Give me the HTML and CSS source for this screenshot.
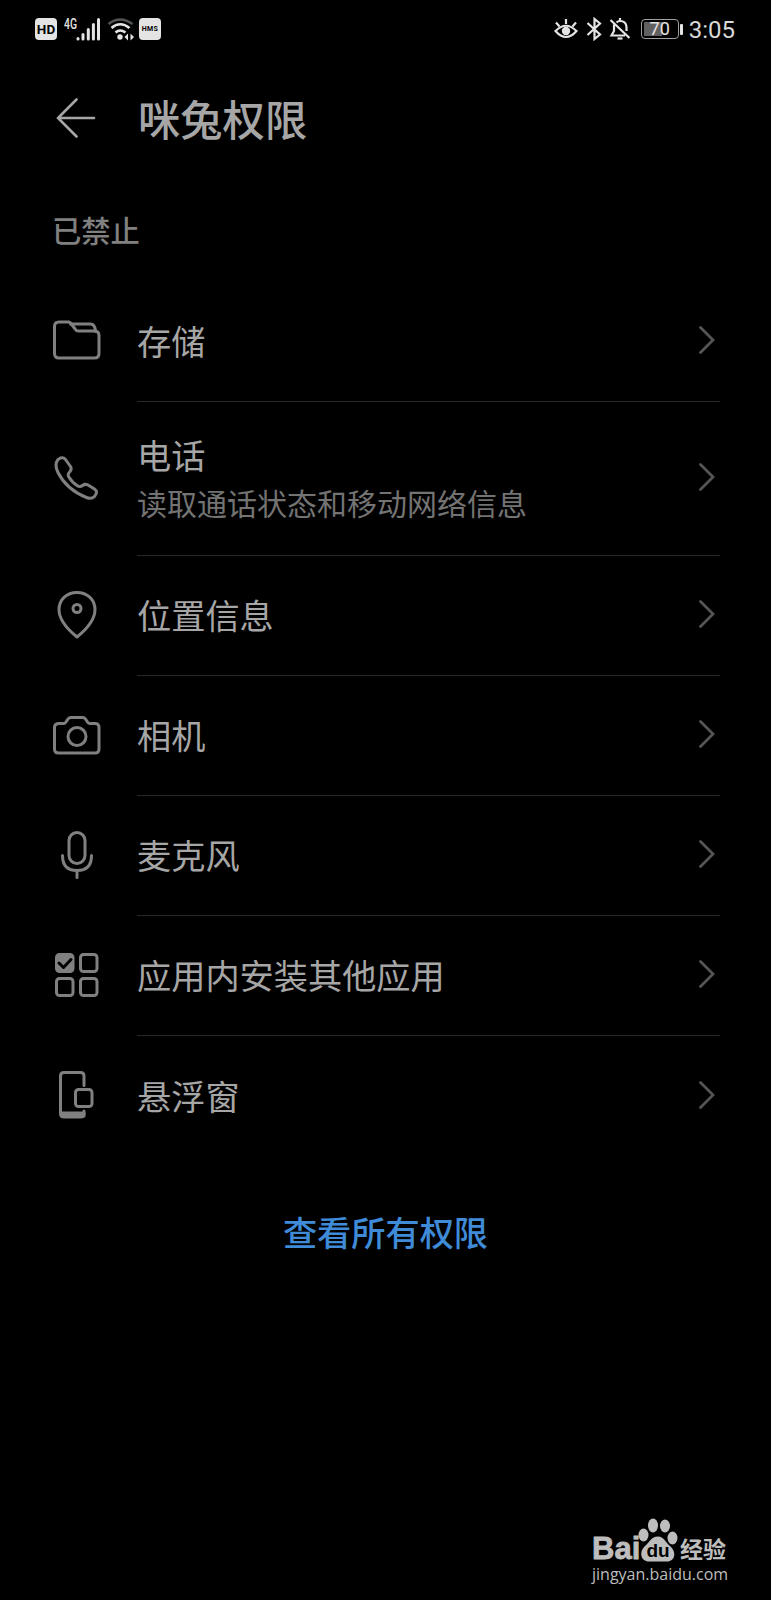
FILE: index.html
```html
<!DOCTYPE html>
<html lang="zh-CN">
<head>
  <meta charset="UTF-8" />
  <meta name="viewport" content="width=device-width, initial-scale=1.0"/>
  <title>咪兔权限</title>
  <link rel="stylesheet" href="styles.css">
</head>
<body>

  <div class="status-bar">
    <div class="status-left">
      <span class="badge hd">HD</span>
      <svg class="signal" width="37" height="24" viewBox="0 0 37 24">
        <text class="net" x="0" y="11.5" textLength="13" lengthAdjust="spacingAndGlyphs">4G</text>
        <g stroke="#e4e4e4" stroke-width="3" stroke-linecap="round">
          <path d="M14 21.5v.5M19 17.5V22M24.300 12.500V22M29.400 7.500V22M34.500 2.500V22"/>
        </g>
      </svg>
      <svg class="wifi" width="28" height="24" viewBox="0 0 28 24" fill="none" stroke-width="2.600">
        <path stroke="#555" d="M1.500 7Q13 -2 25.500 7"/>
        <path stroke="#e4e4e4" d="M4.500 11Q13 3.500 22.500 11M8.500 15.500Q13 11.500 18.500 15.500"/>
        <circle cx="13" cy="20" r="2.700" fill="#e4e4e4"/>
        <path fill="#e4e4e4" d="M17.500 20l3.500-3.500v7zM27 20l-3.500-3.500v7z"/>
      </svg>
      <span class="badge hms">HMS</span>
    </div>
    <div class="status-right">
      <svg class="eye" width="24" height="22" viewBox="0 0 24 22" fill="none" stroke="#e4e4e4" stroke-width="2.200">
        <path d="M1.500 13Q12 2.500 22.500 13Q12 25 1.500 13zM12 6V1M5.500 8.500L2 4.500M18.500 8.500L22 4.500"/>
        <circle cx="12" cy="13" r="4.200" fill="#e4e4e4" stroke="none"/>
      </svg>
      <svg class="bt" width="16" height="24" viewBox="0 0 16 24" fill="none" stroke="#e4e4e4" stroke-width="2.200">
        <path d="M1.500 6L14 17.500L8.500 22V2L14 6.500L1.500 18"/>
      </svg>
      <svg class="bell" width="22" height="24" viewBox="0 0 22 24" fill="none" stroke="#e4e4e4" stroke-width="2.200">
        <path d="M1.500 3L20.500 21M5 7.500V14L2.500 18.500H16M7.500 5.500Q9 4 11 4Q17 4 17.500 10V14M11 4V1"/>
        <path d="M8.500 21.500h5"/>
      </svg>
      <span class="battery"><span class="charge" style="width:56%"></span><span class="percent">70</span></span>
      <span class="battery-tip"></span>
      <span class="clock">3:05</span>
    </div>
  </div>

  <div class="header">
    <svg class="back" width="40" height="40" viewBox="0 0 40 40">
      <path d="M20.500 1.500L2 20L20.500 38.500M2 20H38"/>
    </svg>
    <h1>咪兔权限</h1>
  </div>

  <h2>已禁止</h2>

  <ul class="permissions">
    <li class="row">
      <svg class="icon" viewBox="0 0 48 48">
        <path d="M16 6H6Q1.500 6 1.500 10.500V37.500Q1.500 42 6 42H41.500Q46 42 46 37.500V19.500Q46 15 41.500 15H25Q23.500 15 22.500 13.500L18 7.500Q17 6 15.500 6"/>
        <path d="M17.500 8H37.500Q42 8 42.500 15.500"/>
      </svg>
      <div class="content"><div class="label">存储</div><svg class="chevron" viewBox="0 0 16 28"><path d="M1.500 1.500L14 14L1.500 26.500"/></svg></div>
    </li>
    <li class="row tall">
      <svg class="icon" viewBox="0 0 48 48">
        <path d="M5 5.500L7.500 4Q10.500 3 12.500 5.500L17.500 12.500Q19 15 17 17.500Q14.500 20 15.500 22.500Q19 28.500 25 32.200Q27.500 33.200 29.500 31.500Q32 29.500 35 31L41.500 35Q44.500 37 43 40L41.500 42.500Q38.500 45.500 33.500 43.500Q13.500 35.500 5 18.500Q1 10.500 5 5.500z"/>
      </svg>
      <div class="content">
        <div>
          <div class="label">电话</div>
          <div class="desc">读取通话状态和移动网络信息</div>
        </div>
        <svg class="chevron" viewBox="0 0 16 28"><path d="M1.500 1.500L14 14L1.500 26.500"/></svg>
      </div>
    </li>
    <li class="row">
      <svg class="icon" viewBox="0 0 48 48">
        <path d="M24 1.500C13.500 1.500 6 9 6 18.500C6 28 13.500 37.500 24 46C34.500 37.500 42 28 42 18.500C42 9 34.500 1.500 24 1.500z"/>
        <circle cx="24" cy="17.500" r="4"/>
      </svg>
      <div class="content"><div class="label">位置信息</div><svg class="chevron" viewBox="0 0 16 28"><path d="M1.500 1.500L14 14L1.500 26.500"/></svg></div>
    </li>
    <li class="row">
      <svg class="icon" viewBox="0 0 48 48">
        <path d="M6 12.500H10.500Q12 12.500 13 11L15 8Q16 6.500 18 6.500H29.500Q31.500 6.500 32.500 8L34.500 11Q35.500 12.500 37 12.500H42Q46 12.500 46 16.500V38Q46 42 42 42H5.500Q1.500 42 1.500 38V16.500Q1.500 12.500 6 12.500z"/>
        <circle cx="24" cy="25.500" r="9"/>
      </svg>
      <div class="content"><div class="label">相机</div><svg class="chevron" viewBox="0 0 16 28"><path d="M1.500 1.500L14 14L1.500 26.500"/></svg></div>
    </li>
    <li class="row">
      <svg class="icon" viewBox="0 0 48 48">
        <rect x="16" y="1.500" width="16" height="31" rx="8"/>
        <path d="M9.500 24.500Q9.500 39.500 24 39.500Q38.500 39.500 38.500 24.500M24 39.500V46.500"/>
      </svg>
      <div class="content"><div class="label">麦克风</div><svg class="chevron" viewBox="0 0 16 28"><path d="M1.500 1.500L14 14L1.500 26.500"/></svg></div>
    </li>
    <li class="row">
      <svg class="icon" viewBox="0 0 48 48">
        <rect class="filled" x="3.500" y="3.500" width="16.500" height="17" rx="3"/>
        <rect x="27.500" y="3.500" width="16.500" height="17" rx="3"/>
        <rect x="3.500" y="27.500" width="16.500" height="17" rx="3"/>
        <rect x="27.500" y="27.500" width="16.500" height="17" rx="3"/>
        <path class="check" d="M6 12L10.500 16.500L18 8.500"/>
      </svg>
      <div class="content"><div class="label">应用内安装其他应用</div><svg class="chevron" viewBox="0 0 16 28"><path d="M1.500 1.500L14 14L1.500 26.500"/></svg></div>
    </li>
    <li class="row">
      <svg class="icon" viewBox="0 0 48 48">
        <path d="M31 14.500V5Q31 1.500 27.500 1.500H11Q7.500 1.500 7.500 5V42.500Q7.500 46 11 46H27.500Q31 46 31 42.500V40"/>
        <path class="filled" d="M8 42H31V45H9z"/>
        <rect x="22.500" y="18.500" width="16.500" height="17" rx="3"/>
      </svg>
      <div class="content"><div class="label">悬浮窗</div><svg class="chevron" viewBox="0 0 16 28"><path d="M1.500 1.500L14 14L1.500 26.500"/></svg></div>
    </li>
  </ul>

  <a class="view-all">查看所有权限</a>

  <div class="watermark">
    <div class="brand">
      <span class="bai">Bai</span>
      <span class="paw">
        <svg width="40" height="44" viewBox="0 0 40 44" fill="#bdbdbd">
          <ellipse cx="5.500" cy="17" rx="5" ry="6.500"/>
          <ellipse cx="15" cy="7.500" rx="5" ry="7"/>
          <ellipse cx="27" cy="8" rx="5" ry="6.500"/>
          <ellipse cx="34.500" cy="20" rx="5" ry="6.500"/>
          <path d="M20 18.500C26 18.500 27 24 32 28C39 34 37 43.500 29 43.500H11C3 43.500 .5 34 7 28C12 24 13 18.500 20 18.500z"/>
        </svg>
        <span class="du">du</span>
      </span>
      <span class="jingyan">经验</span>
    </div>
    <div class="url">jingyan.baidu.com</div>
  </div>

</body>
</html>
```
FILE: styles.css
```css
* {
  box-sizing: border-box;
}

body {
  margin: 0;
  height: 1600px;
  overflow: hidden;
  background-color: #000;
  color: #a6a6a6;
  font-family: Roboto, "Noto Sans CJK SC", sans-serif;
  display: flex;
  flex-direction: column;
}

svg {
  display: block;
  flex: none;
}

.status-bar {
  height: 58px;
  padding: 0 35px;
  display: flex;
  justify-content: space-between;
  align-items: center;
}

.status-left, .status-right {
  display: flex;
  align-items: center;
}

.badge {
  width: 22px;
  height: 22px;
  border-radius: 4px;
  background-color: #e4e4e4;
  color: #000;
  display: flex;
  align-items: center;
  justify-content: center;
  font-weight: bold;
}

.hd {
  font-size: 13.5px;
}

.hms {
  margin-left: -1px;
  font-size: 7px;
  letter-spacing: 0.3px;
}

.signal {
  margin-left: 7px;
}

.net {
  font-size: 14px;
  font-weight: 500;
  fill: #e4e4e4;
}

.wifi {
  margin: 0 5px 0 6px;
}

.eye {
  margin-right: 8px;
}

.bt {
  margin-right: 7px;
}

.bell {
  margin-right: 10px;
}

.battery {
  position: relative;
  width: 38px;
  height: 20px;
  border: 1.500px solid #a0a0a0;
  border-radius: 4px;
  padding: 2px;
}

.charge {
  display: block;
  height: 100%;
  background-color: #606060;
}

.percent {
  position: absolute;
  inset: 0;
  text-align: center;
  line-height: 18px;
  font-size: 18px;
  color: #e4e4e4;
}

.battery-tip {
  width: 3px;
  height: 11px;
  margin: 0 6px 0 1px;
  border-radius: 1px;
  background-color: #e4e4e4;
}

.clock {
  padding: 2px 1px 0 0;
  font-size: 24px;
  color: #d8d8d8;
}

.header {
  height: 120px;
  padding-left: 56px;
  display: flex;
  align-items: center;
}

.back {
  margin-right: 42px;
  fill: none;
  stroke: #a6a6a6;
  stroke-width: 2.600;
  stroke-linecap: round;
}

h1 {
  margin: 7px 0 0;
  font-size: 42.300px;
  line-height: 60px;
  font-weight: 500;
}

h2 {
  margin: 34px 0 0;
  padding-left: 52px;
  height: 69px;
  font-size: 29.300px;
  line-height: 40px;
  font-weight: 500;
  color: #808080;
}

.permissions {
  list-style: none;
  margin: 0;
  padding: 0 51px 0 53px;
}

.row {
  height: 120px;
  display: flex;
  align-items: center;
}

.row:first-child {
  height: 121px;
}

.row.tall {
  height: 154px;
}

.icon {
  width: 48px;
  height: 48px;
  margin: 0 36px 3px 0;
  fill: none;
  stroke: #808080;
  stroke-width: 3;
  stroke-linecap: round;
  stroke-linejoin: round;
}

.icon .filled {
  fill: #808080;
}

.icon .check {
  stroke: #000;
}

.content {
  flex: 1;
  height: 100%;
  padding-right: 5px;
  border-bottom: 1px solid #282828;
  display: flex;
  align-items: center;
  justify-content: space-between;
}

.row:last-child .content {
  border-bottom: none;
}

.label {
  padding-top: 3px;
  font-size: 34.200px;
  line-height: 48px;
}

.desc {
  padding-top: 1px;
  font-size: 30px;
  line-height: 46px;
  color: #737373;
}

.chevron {
  width: 16px;
  height: 28px;
  margin-bottom: 3px;
  fill: none;
  stroke: #555;
  stroke-width: 2.800;
  stroke-linecap: round;
}

.view-all {
  margin-top: 54px;
  text-align: center;
  font-size: 34.200px;
  line-height: 48px;
  font-weight: 500;
  color: #3f8bd8;
}

.watermark {
  width: 142px;
  margin: auto 37px 14px auto;
  color: #bdbdbd;
}

.brand {
  height: 44px;
  display: flex;
  align-items: flex-end;
}

.bai {
  width: 46px;
  font-family: "Liberation Sans", Arial, sans-serif;
  font-size: 31px;
  line-height: 26px;
  font-weight: bold;
  -webkit-text-stroke: 0.8px #bdbdbd;
}

.paw {
  position: relative;
}

.du {
  position: absolute;
  left: 0;
  right: 0;
  bottom: 1px;
  text-align: center;
  font-family: "Liberation Sans", Arial, sans-serif;
  font-size: 19px;
  line-height: 20px;
  font-weight: bold;
  color: #000;
}

.jingyan {
  margin-left: 2px;
  font-size: 23px;
  line-height: 22px;
  font-weight: bold;
  white-space: nowrap;
}

.url {
  font-family: "Open Sans", sans-serif;
  font-size: 16px;
  line-height: 24px;
}
```
